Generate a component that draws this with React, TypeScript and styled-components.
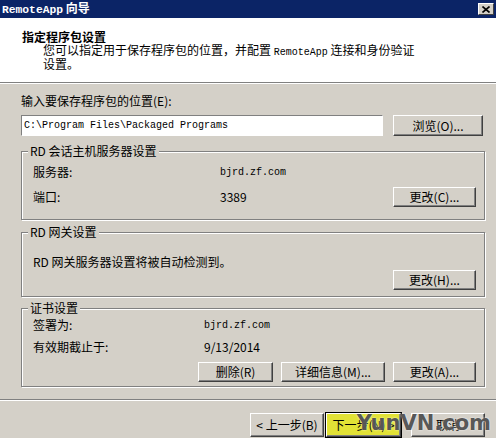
import React from 'react';
import styled, { createGlobalStyle } from 'styled-components';

const GlobalStyle = createGlobalStyle`
	html, body {
		margin: 0;
		padding: 0;
		background: #d4d0c8;
	}
	body {
		font-family: "Noto Sans CJK SC", "Liberation Sans", sans-serif;
		font-size: 12px;
		color: #000;
	}
`;

const Window = styled.div`
	position: relative;
	width: 496px;
	height: 438px;
	overflow: hidden;
	display: flex;
	flex-direction: column;
	background: #d4d0c8;
`;

const TitleBar = styled.div`
	height: 18px;
	flex-shrink: 0;
	box-sizing: border-box;
	padding: 0 2px 0 2px;
	background: #0b2466;
	color: #fff;
	display: flex;
	align-items: center;
	justify-content: space-between;
`;

const TitleText = styled.span`
	font-weight: bold;
	font-size: 12px;
	line-height: 18px;
	white-space: nowrap;
`;

const TitleMono = styled.span`
	font-family: "Liberation Mono", monospace;
	font-size: 11.3px;
	font-weight: bold;
`;

const CloseButton = styled.div`
	width: 16px;
	height: 12px;
	box-sizing: border-box;
	background: #d4d0c8;
	border: 1px solid;
	border-color: #fff #404040 #404040 #fff;
	display: flex;
	align-items: center;
	justify-content: center;
`;

const Header = styled.div`
	height: 64px;
	flex-shrink: 0;
	box-sizing: border-box;
	background: #fff;
	padding: 12px 0 0 22px;
`;

const HeaderTitle = styled.div`
	font-weight: bold;
	line-height: 14px;
`;

const HeaderDesc = styled.div`
	margin-left: 21px;
	line-height: 11px;
	white-space: nowrap;
`;

const Mono = styled.span`
	font-family: "Liberation Mono", monospace;
	font-size: 10px;
`;

const Separator = styled.div<{ $top?: number }>`
	height: 1px;
	flex-shrink: 0;
	margin-top: ${p => p.$top ?? 0}px;
	background: #808080;
	border-bottom: 1px solid #fff;
`;

const Body = styled.div`
	padding: 10px 11px 0 21px;
	display: flex;
	flex-direction: column;
`;

const FieldLabel = styled.div`
	line-height: 14px;
`;

const PathRow = styled.div`
	margin-top: 7px;
	margin-right: 2px;
	display: flex;
	align-items: center;
	gap: 10px;
`;

const PathInput = styled.div`
	flex: 1;
	height: 21px;
	box-sizing: border-box;
	background: #fff;
	border: 1px solid;
	border-color: #808080 #fff #fff #808080;
	padding: 0 2px;
	display: flex;
	align-items: center;
	font-family: "Liberation Mono", monospace;
	font-size: 10px;
	white-space: nowrap;
`;

const Button = styled.button<{ $w: number; $h?: number; $primary?: boolean }>`
	width: ${p => p.$w}px;
	height: ${p => p.$h ?? 20}px;
	box-sizing: border-box;
	padding: 0;
	margin: 0;
	font-family: "Noto Sans CJK SC", "Liberation Sans", sans-serif;
	font-size: 12px;
	line-height: 1;
	color: #000;
	background: ${p => (p.$primary ? '#e2e236' : '#d4d0c8')};
	border: 1px solid;
	border-color: #fff #404040 #404040 #fff;
	box-shadow: inset -1px -1px 0 #808080;
	outline: ${p => (p.$primary ? '1px solid #000' : 'none')};
	outline-offset: 0;
	display: flex;
	align-items: center;
	justify-content: center;
	white-space: nowrap;
`;

const GroupBox = styled.div<{ $top: number; $pad: string }>`
	position: relative;
	margin-top: ${p => p.$top}px;
	padding: ${p => p.$pad};
	border: 1px solid #808080;
	box-shadow: inset 1px 1px 0 #fff, 1px 1px 0 #fff;
	display: flex;
	flex-direction: column;
`;

const Legend = styled.span`
	position: absolute;
	top: -8px;
	left: 6px;
	padding: 0 2px;
	line-height: 14px;
	background: #d4d0c8;
	white-space: nowrap;
`;

const InfoRow = styled.div<{ $labelW: number; $gap?: number }>`
	display: flex;
	align-items: center;
	min-height: 14px;
	margin-top: ${p => p.$gap ?? 0}px;
	line-height: 14px;

	& > span:first-child {
		width: ${p => p.$labelW}px;
		flex-shrink: 0;
	}
	& > span:nth-child(2) {
		flex: 1;
	}
`;

const ButtonRow = styled.div<{ $gap: number; $top?: number }>`
	display: flex;
	justify-content: flex-end;
	gap: ${p => p.$gap}px;
	margin-top: ${p => p.$top ?? 0}px;
`;

const Footer = styled.div`
	margin-top: 12px;
	padding-right: 11px;
	display: flex;
	justify-content: flex-end;
	align-items: center;
	gap: 10px;
`;

const NavPair = styled.div`
	display: flex;
	gap: 2px;
`;

const Watermark = styled.span`
	position: absolute;
	right: 5px;
	bottom: 4px;
	font-family: "DejaVu Sans", "Liberation Sans", sans-serif;
	font-weight: bold;
	font-size: 21px;
	line-height: 22px;
	color: rgba(72, 72, 72, 0.92);
	text-shadow: 0 0 2px rgba(255, 255, 255, 0.9);
	pointer-events: none;
`;

const App: React.FC = () => {
	return (
		<>
			<GlobalStyle />
			<Window>
				<TitleBar>
					<TitleText>
						<TitleMono>RemoteApp</TitleMono> 向导
					</TitleText>
					<CloseButton>
						<svg width="8" height="7" viewBox="0 0 8 7">
							<path d="M0.5 0.5 L7.5 6.5 M7.5 0.5 L0.5 6.5" stroke="#000" strokeWidth="1.6" />
						</svg>
					</CloseButton>
				</TitleBar>
				<Header>
					<HeaderTitle>指定程序包设置</HeaderTitle>
					<HeaderDesc>
						您可以指定用于保存程序包的位置，并配置 <Mono>RemoteApp</Mono> 连接和身份验证
						<br />
						设置。
					</HeaderDesc>
				</Header>
				<Separator />
				<Body>
					<FieldLabel>输入要保存程序包的位置(E):</FieldLabel>
					<PathRow>
						<PathInput>C:\Program Files\Packaged Programs</PathInput>
						<Button $w={90} $h={21}>浏览(O)...</Button>
					</PathRow>

					<GroupBox $top={15} $pad="11px 8px 12px 11px">
						<Legend>RD 会话主机服务器设置</Legend>
						<InfoRow $labelW={187}>
							<span>服务器:</span>
							<span><Mono>bjrd.zf.com</Mono></span>
						</InfoRow>
						<InfoRow $labelW={187} $gap={7}>
							<span>端口:</span>
							<span>3389</span>
							<Button $w={83}>更改(C)...</Button>
						</InfoRow>
					</GroupBox>

					<GroupBox $top={12} $pad="22px 8px 6px 11px">
						<Legend>RD 网关设置</Legend>
						<InfoRow $labelW={300}>
							<span>RD 网关服务器设置将被自动检测到。</span>
						</InfoRow>
						<ButtonRow $gap={0} $top={1}>
							<Button $w={83}>更改(H)...</Button>
						</ButtonRow>
					</GroupBox>

					<GroupBox $top={11} $pad="7px 8px 4px 11px">
						<Legend>证书设置</Legend>
						<InfoRow $labelW={171}>
							<span>签署为:</span>
							<span><Mono>bjrd.zf.com</Mono></span>
						</InfoRow>
						<InfoRow $labelW={171} $gap={7}>
							<span>有效期截止于:</span>
							<span>9/13/2014</span>
						</InfoRow>
						<ButtonRow $gap={8} $top={8}>
							<Button $w={75}>删除(R)</Button>
							<Button $w={104}>详细信息(M)...</Button>
							<Button $w={83}>更改(A)...</Button>
						</ButtonRow>
					</GroupBox>
				</Body>
				<Separator $top={12} />
				<Footer>
					<NavPair>
						<Button $w={74} $h={24}>&lt; 上一步(B)</Button>
						<Button $w={75} $h={24} $primary>下一步(N) &gt;</Button>
					</NavPair>
					<Button $w={74} $h={24}>取消</Button>
				</Footer>
				<Watermark>YunVN.com</Watermark>
			</Window>
		</>
	);
};

export default App;
